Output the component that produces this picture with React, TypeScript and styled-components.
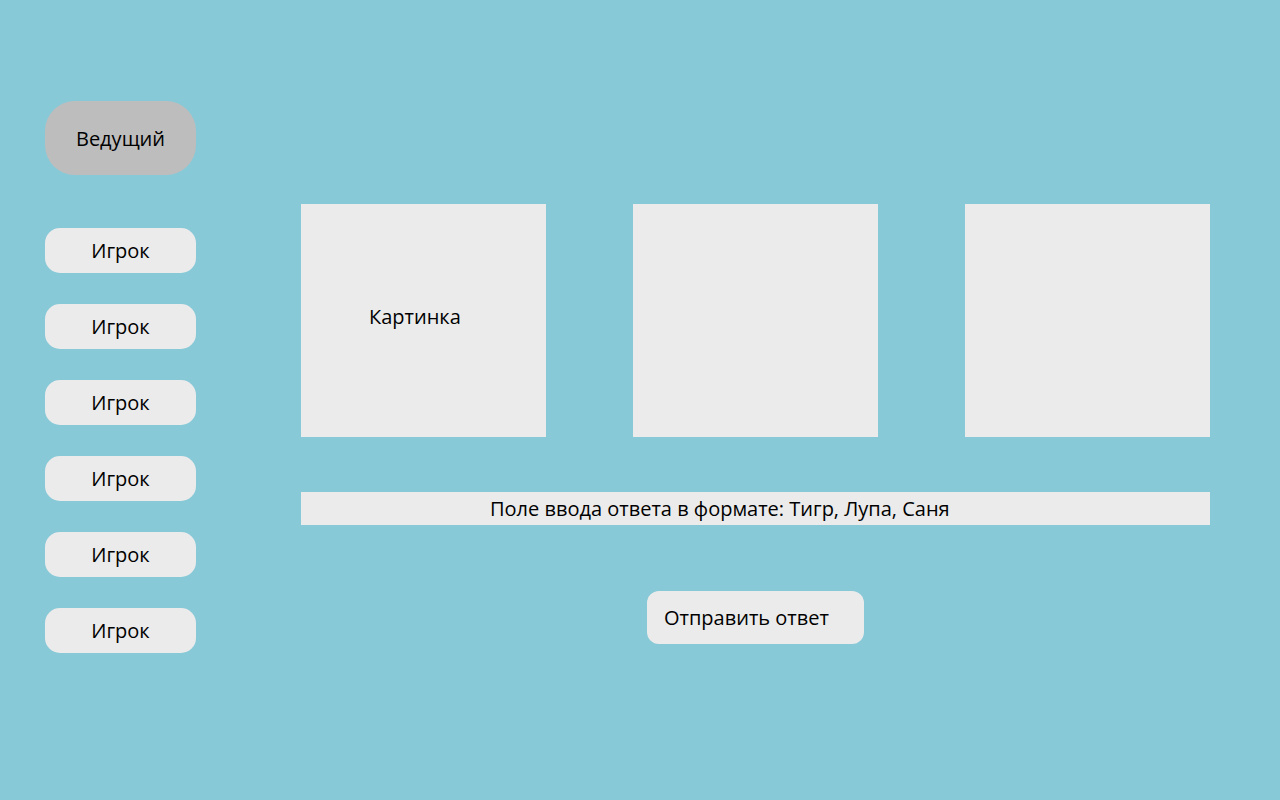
import React from "react";
import styled, { createGlobalStyle } from "styled-components";

const Global = createGlobalStyle`
  html, body { margin: 0; padding: 0; }
  body {
    background: #88c9d8;
    font-family: "Open Sans", "Noto Sans", sans-serif;
    color: #000;
  }
`;

const Page = styled.div`
  width: 1280px;
  height: 800px;
  background: #88c9d8;
  display: flex;
  box-sizing: border-box;
`;

const Sidebar = styled.div`
  display: flex;
  flex-direction: column;
  padding: 101px 0 0 45px;
  width: 151px;
`;

const Host = styled.div`
  width: 151px;
  height: 74px;
  border-radius: 30px;
  background: #bdbdbd;
  display: flex;
  align-items: center;
  justify-content: center;
  font-size: 20px;
  margin-bottom: 53px;
`;

const PlayerList = styled.div`
  display: flex;
  flex-direction: column;
  gap: 31px;
`;

const Player = styled.div`
  width: 151px;
  height: 45px;
  border-radius: 15px;
  background: #ebebeb;
  display: flex;
  align-items: center;
  justify-content: center;
  font-size: 20px;
`;

const Main = styled.div`
  display: flex;
  flex-direction: column;
  padding: 204px 0 0 105px;
`;

const Pictures = styled.div`
  display: flex;
  gap: 87px;
`;

const Picture = styled.div`
  width: 245px;
  height: 233px;
  background: #ebebeb;
  display: flex;
  align-items: center;
  padding-left: 68px;
  padding-bottom: 8px;
  box-sizing: border-box;
  font-size: 20px;
`;

const AnswerField = styled.div`
  margin-top: 55px;
  width: 909px;
  height: 33px;
  background: #ebebeb;
  display: flex;
  align-items: center;
  padding-left: 189px;
  box-sizing: border-box;
  font-size: 20px;
`;

const SendRow = styled.div`
  display: flex;
  padding-left: 346px;
  margin-top: 66px;
`;

const SendButton = styled.div`
  width: 217px;
  height: 53px;
  border-radius: 12px;
  background: #ebebeb;
  display: flex;
  align-items: center;
  padding-left: 17px;
  box-sizing: border-box;
  font-size: 20px;
`;

export default function App() {
  return (
    <>
      <Global />
      <Page>
        <Sidebar>
          <Host>Ведущий</Host>
          <PlayerList>
            {Array.from({ length: 6 }).map((_, i) => (
              <Player key={i}>Игрок</Player>
            ))}
          </PlayerList>
        </Sidebar>
        <Main>
          <Pictures>
            <Picture>Картинка</Picture>
            <Picture />
            <Picture />
          </Pictures>
          <AnswerField>Поле ввода ответа в формате: Тигр, Лупа, Саня</AnswerField>
          <SendRow>
            <SendButton>Отправить ответ</SendButton>
          </SendRow>
        </Main>
      </Page>
    </>
  );
}
